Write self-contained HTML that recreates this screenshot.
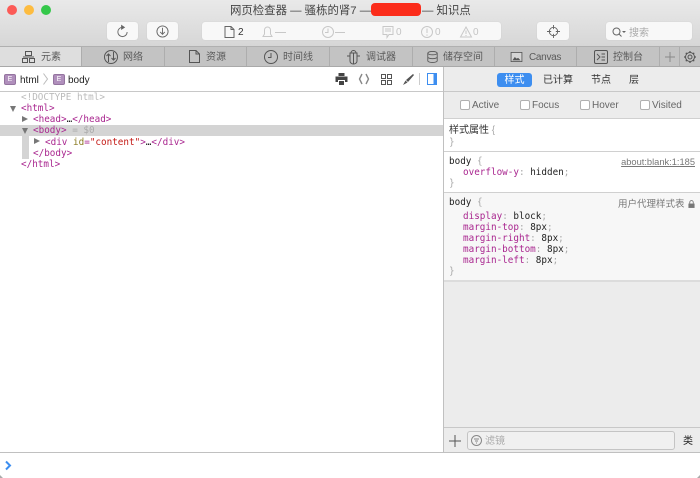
<!DOCTYPE html>
<html><head><meta charset="utf-8">
<style>
html,body{margin:0;padding:0;background:#fff}
#r{position:relative;width:700px;height:478px;overflow:hidden;background:#fff;font-family:"Liberation Sans","Noto Sans CJK SC",sans-serif;font-size:10px;color:#333;filter:blur(.3px)}
.a{position:absolute;white-space:nowrap}
.btn{position:absolute;top:22px;height:18px;background:#f8f8f8;border-radius:3px;box-shadow:0 0 1px #c4c4c4}
.tab{position:absolute;top:46px;height:20px;background:#c3c3c3;border-right:1px solid #adadad;box-sizing:border-box}
.tl{position:absolute;top:52px;font-size:10px;line-height:12px;color:#5a5a5a;white-space:nowrap}
.m{position:absolute;font:9.3px/11px "DejaVu Sans Mono","Liberation Mono",monospace;white-space:pre;color:#222}
.t{color:#a9268f}.g{color:#aaa}.v{color:#c41a16}.y{color:#8a7a20}
.cb{position:absolute;top:100px;width:10px;height:10px;border:1px solid #b0b0b0;border-radius:2px;background:#fff;box-sizing:border-box}
.cl{position:absolute;top:100px;font-size:10px;line-height:12px;color:#666}
svg{position:absolute;overflow:visible}
.tri{position:absolute;width:0;height:0}
.d{border-left:3.5px solid transparent;border-right:3.5px solid transparent;border-top:6px solid #777}
.rr{border-top:3.5px solid transparent;border-bottom:3.5px solid transparent;border-left:6px solid #777}
.E{position:absolute;top:74px;width:12px;height:11px;background:#b08fbc;border:1px solid #94749f;box-sizing:border-box;border-radius:2px;color:#fff;font-size:7px;line-height:9px;text-align:center}
</style></head><body>
<div id="r">
<!-- title/tool bar -->
<div class="a" style="left:0;top:0;width:700px;height:46px;background:linear-gradient(#e9e9e9,#d6d6d6)"></div>
<div class="a" style="left:7px;top:5px;width:10px;height:10px;border-radius:50%;background:#fc5b57"></div>
<div class="a" style="left:24px;top:5px;width:10px;height:10px;border-radius:50%;background:#fdbc40"></div>
<div class="a" style="left:41px;top:5px;width:10px;height:10px;border-radius:50%;background:#34c84a"></div>
<div class="a" style="left:230px;top:3px;font-size:11.4px;line-height:16px;color:#444">网页检查器 — 骚栋的肾7 —</div>
<div class="a" style="left:371px;top:3px;width:50px;height:13px;background:#fb2c1a;border-radius:4px"></div>
<div class="a" style="left:422px;top:3px;font-size:11.4px;line-height:16px;color:#444">— 知识点</div>

<div class="btn" style="left:107px;width:31px"></div>
<svg style="left:116px;top:25px" width="13" height="13" viewBox="0 0 14 14" fill="none" stroke="#666"><path d="M7 2.500a5 5 0 1 0 5 5"/><path d="M6 0.500l3 2-3 2z" fill="#666"/></svg>
<div class="btn" style="left:147px;width:31px"></div>
<svg style="left:156px;top:25px" width="13" height="13" viewBox="0 0 14 14" fill="none" stroke="#666"><circle cx="7" cy="7" r="6"/><path d="M7 3v7M4.500 7.500L7 10l2.500-2.500"/></svg>
<div class="btn" style="left:202px;width:299px"></div>
<svg style="left:224px;top:26px" width="11" height="12" viewBox="0 0 11 12" fill="none" stroke="#666"><path d="M1 .5h6l3 3v8H1zM7 .5v3h3"/></svg>
<div class="a" style="left:238px;top:27px;font-size:10px;line-height:12px;color:#333">2</div>
<svg style="left:262px;top:26px" width="26" height="12" viewBox="0 0 26 12" fill="none" stroke="#c8c8c8"><path d="M1 10.500h9L8.500 8V4a3 3 0 0 0-6 0v4zM13 6.500h11"/></svg>
<svg style="left:322px;top:26px" width="24" height="12" viewBox="0 0 24 12" fill="none" stroke="#c8c8c8"><circle cx="6" cy="6" r="5.500"/><path d="M6 2.500V6.500H3M13 6.500h10"/></svg>
<svg style="left:382px;top:26px" width="12" height="12" viewBox="0 0 12 12" fill="none" stroke="#c8c8c8"><path d="M1 .5h10v8H7l-2 3v-3H1zM3 3h6M3 5h6"/></svg>
<div class="a" style="left:396px;top:27px;line-height:12px;color:#c4c4c4">0</div>
<svg style="left:421px;top:26px" width="12" height="12" viewBox="0 0 12 12" fill="none" stroke="#c8c8c8"><circle cx="6" cy="6" r="5.500"/><path d="M6 2.500v4.500M6 8.500v1.200"/></svg>
<div class="a" style="left:435px;top:27px;line-height:12px;color:#c4c4c4">0</div>
<svg style="left:460px;top:26px" width="12" height="12" viewBox="0 0 12 12" fill="none" stroke="#c8c8c8"><path d="M6 1l5.500 10H.5zM6 4.500v3.500M6 9v1"/></svg>
<div class="a" style="left:473px;top:27px;line-height:12px;color:#c4c4c4">0</div>
<div class="btn" style="left:537px;width:32px"></div>
<svg style="left:547px;top:25px" width="13" height="13" viewBox="0 0 14 14" fill="none" stroke="#666"><circle cx="7" cy="7" r="4.500"/><path d="M7 0v4.500M7 9.500V14M0 7h4.500M9.500 7H14"/></svg>
<div class="btn" style="left:606px;width:86px"></div>
<svg style="left:612px;top:27px" width="16" height="10" viewBox="0 0 16 10" fill="none" stroke="#666"><circle cx="4.500" cy="4.500" r="3.500"/><path d="M7 7l2.500 2.500"/><path d="M10 4h4l-2 2z" fill="#666" stroke="none"/></svg>
<div class="a" style="left:629px;top:27px;font-size:10px;line-height:14px;color:#aaa">搜索</div>

<!-- tabs -->
<div class="tab" style="left:0;width:82px;background:#dedede"></div>
<div class="tab" style="left:82px;width:83px"></div>
<div class="tab" style="left:165px;width:82px"></div>
<div class="tab" style="left:247px;width:83px"></div>
<div class="tab" style="left:330px;width:83px"></div>
<div class="tab" style="left:413px;width:82px"></div>
<div class="tab" style="left:495px;width:82px"></div>
<div class="tab" style="left:577px;width:83px"></div>
<div class="tab" style="left:660px;width:20px"></div>
<div class="tab" style="left:680px;width:20px;border-right:0"></div>
<div class="a" style="left:0;top:46px;width:700px;height:1px;background:#b0b0b0"></div>
<div class="a" style="left:0;top:66px;width:700px;height:1px;background:#a9a9a9"></div>

<svg style="left:22px;top:51px" width="13" height="12" viewBox="0 0 13 12" fill="none" stroke="#555"><path d="M3.500.5h6v4h-6zM.5 7.500h5v4h-5zM7.500 7.500h5v4h-5zM1 6h11"/></svg>
<div class="tl" style="left:41px">元素</div>
<svg style="left:104px;top:50px" width="14" height="14" viewBox="0 0 14 14" fill="none" stroke="#555"><circle cx="7" cy="7" r="6.500"/><path d="M4.500 12V4M2.500 6l2-2 2 2M9.500 2v8M7.500 8l2 2 2-2"/></svg>
<div class="tl" style="left:123px">网络</div>
<svg style="left:189px;top:50px" width="11" height="13" viewBox="0 0 11 13" fill="none" stroke="#555"><path d="M.5.5h6.500l3.500 3.500v8.500H.5zM7 .5V4h3.500"/></svg>
<div class="tl" style="left:206px">资源</div>
<svg style="left:264px;top:50px" width="14" height="14" viewBox="0 0 14 14" fill="none" stroke="#555"><circle cx="7" cy="7" r="6.500"/><path d="M7 3v4.500H4"/></svg>
<div class="tl" style="left:283px">时间线</div>
<svg style="left:347px;top:50px" width="13" height="14" viewBox="0 0 13 14" fill="none" stroke="#555"><path d="M3 3h7v8a3.500 3 0 0 1-7 0zM6.500 3v11M0 6h3M10 6h3M4 3a2.500 2.500 0 0 1 5 0"/></svg>
<div class="tl" style="left:366px">调试器</div>
<svg style="left:426px;top:51px" width="13" height="12" viewBox="0 0 13 14" fill="none" stroke="#555"><ellipse cx="6.500" cy="2.500" rx="5.500" ry="2"/><path d="M1 2.500v9c0 1 2.500 2 5.500 2s5.500-1 5.500-2v-9M1 7c0 1 2.500 2 5.500 2s5.500-1 5.500-2"/></svg>
<div class="tl" style="left:443px">储存空间</div>
<svg style="left:510px;top:52px" width="13" height="10" viewBox="0 0 14 12"><rect x=".5" y=".5" width="13" height="11" fill="#fff" fill-opacity=".3" stroke="#555"/><path d="M2 10l3-4 2 2 2-1 3 3z" fill="#555"/></svg>
<div class="tl" style="left:529px;letter-spacing:-.3px">Canvas</div>
<svg style="left:594px;top:50px" width="14" height="14" viewBox="0 0 14 14" fill="none" stroke="#555"><rect x=".5" y=".5" width="13" height="13" rx="1.500"/><path d="M3 4l3 3-3 3M7.500 4h3.500M7.500 7h3.500M7.500 10h3.500" stroke-width=".9"/></svg>
<div class="tl" style="left:613px">控制台</div>
<svg style="left:665px;top:52px" width="10" height="10" viewBox="0 0 10 10" stroke="#888"><path d="M5 0v10M0 5h10"/></svg>
<svg style="left:684px;top:51px" width="12" height="12" viewBox="0 0 12 12" fill="none" stroke="#555"><circle cx="6" cy="6" r="2"/><circle cx="6" cy="6" r="4.500"/><path d="M6 0v1.500M6 10.500V12M0 6h1.500M10.500 6H12M1.800 1.800l1 1M9.200 9.200l1 1M1.800 10.200l1-1M9.200 2.800l1-1" stroke-width="1.300"/></svg>

<!-- left panel header -->
<div class="a" style="left:0;top:67px;width:443px;height:24px;background:#fff"></div>
<div class="a" style="left:0;top:91px;width:443px;height:1px;background:#c8c8c8"></div>
<div class="E" style="left:4px">E</div>
<div class="a" style="left:20px;top:74px;font-size:10px;line-height:13px;color:#222">html</div>
<svg style="left:43px;top:73px" width="5" height="12" viewBox="0 0 5 12" fill="none" stroke="#bbb"><path d="M.5.5l4 5.500-4 5.500"/></svg>
<div class="E" style="left:53px">E</div>
<div class="a" style="left:68px;top:74px;font-size:10px;line-height:13px;color:#222">body</div>

<svg style="left:335px;top:73px" width="13" height="12" viewBox="0 0 12 12"><path d="M3 0h6v3H3zM0 3.500h12V9h-2.500V7h-7v2H0zM3.500 8h5v4h-5z" fill="#444"/></svg>
<svg style="left:358px;top:73px" width="12" height="12" viewBox="0 0 12 12" fill="none" stroke="#888" stroke-width="1.400"><path d="M4 1L1.500 6 4 11M8 1l2.500 5L8 11"/></svg>
<svg style="left:381px;top:74px" width="11" height="11" viewBox="0 0 11 11" fill="none" stroke="#555"><rect x=".5" y=".5" width="4" height="4"/><rect x="6.500" y=".5" width="4" height="4"/><rect x=".5" y="6.500" width="4" height="4"/><rect x="6.500" y="6.500" width="4" height="4"/></svg>
<svg style="left:403px;top:74px" width="11" height="11" viewBox="0 0 11 11"><path d="M10 0l1 1-6 7-2-2zM2.500 6.500l2 2L0 11z" fill="#555"/></svg>
<div class="a" style="left:419px;top:73px;width:1px;height:12px;background:#ccc"></div>
<svg style="left:427px;top:73px" width="10" height="12" viewBox="0 0 10 12"><rect x=".5" y=".5" width="9" height="11" fill="none" stroke="#3d8ef0"/><rect x="6.500" y="1" width="2.500" height="10" fill="#3d8ef0"/></svg>

<!-- DOM tree -->
<div class="a" style="left:0;top:125px;width:443px;height:11px;background:#d4d4d4"></div>
<div class="a" style="left:22px;top:136px;width:7px;height:23px;background:#d4d4d4"></div>
<div class="m g" style="left:21px;top:92px;color:#bbb">&lt;!DOCTYPE html&gt;</div>
<div class="tri d" style="left:10px;top:106px"></div>
<div class="m" style="left:21px;top:103px"><span class="t">&lt;html&gt;</span></div>
<div class="tri rr" style="left:22px;top:116px"></div>
<div class="m" style="left:33px;top:114px"><span class="t">&lt;head&gt;</span>…<span class="t">&lt;/head&gt;</span></div>
<div class="tri d" style="left:22px;top:128px"></div>
<div class="m" style="left:33px;top:125px"><span class="t">&lt;body&gt;</span><span class="g"> = $0</span></div>
<div class="tri rr" style="left:34px;top:138px"></div>
<div class="m" style="left:45px;top:137px"><span class="t">&lt;div</span> <span class="y">id</span><span class="t">=</span><span class="v">"content"</span><span class="t">&gt;</span>…<span class="t">&lt;/div&gt;</span></div>
<div class="m" style="left:33px;top:148px"><span class="t">&lt;/body&gt;</span></div>
<div class="m" style="left:21px;top:159px"><span class="t">&lt;/html&gt;</span></div>

<!-- right panel -->
<div class="a" style="left:443px;top:67px;width:257px;height:385px;background:#ececec;border-left:1px solid #c0c0c0;box-sizing:border-box"></div>
<div class="a" style="left:444px;top:91px;width:256px;height:1px;background:#c8c8c8"></div>
<div class="a" style="left:497px;top:73px;width:35px;height:14px;background:#3d8ef0;border-radius:3px;color:#fff;font-size:10px;line-height:16px;text-align:center">样式</div>
<div class="a" style="left:543px;top:74px;font-size:10px;line-height:13px;color:#333">已计算</div>
<div class="a" style="left:591px;top:74px;font-size:10px;line-height:13px;color:#333">节点</div>
<div class="a" style="left:629px;top:74px;font-size:10px;line-height:13px;color:#333">层</div>

<div class="cb" style="left:460px"></div><div class="cl" style="left:472px">Active</div>
<div class="cb" style="left:520px"></div><div class="cl" style="left:532px">Focus</div>
<div class="cb" style="left:580px"></div><div class="cl" style="left:592px">Hover</div>
<div class="cb" style="left:640px"></div><div class="cl" style="left:652px">Visited</div>
<div class="a" style="left:444px;top:118px;width:256px;height:1px;background:#d0d0d0"></div>

<div class="a" style="left:444px;top:119px;width:256px;height:32px;background:#fff"></div>
<div class="a" style="left:449px;top:124px;font-size:10px;line-height:13px;color:#333">样式属性 <span style="color:#aaa">{</span></div>
<div class="m g" style="left:449px;top:137px">}</div>
<div class="a" style="left:444px;top:151px;width:256px;height:1px;background:#d0d0d0"></div>

<div class="a" style="left:444px;top:152px;width:256px;height:40px;background:#fff"></div>
<div class="m" style="left:449px;top:156px">body <span class="g">{</span></div>
<div class="m" style="left:463px;top:167px"><span class="t">overflow-y</span><span class="g">:</span> hidden<span class="g">;</span></div>
<div class="m g" style="left:449px;top:178px">}</div>
<div class="a" style="right:5px;top:156px;font-size:9.300px;line-height:12px;color:#777;text-decoration:underline">about:blank:1:185</div>
<div class="a" style="left:444px;top:192px;width:256px;height:1px;background:#d0d0d0"></div>

<div class="a" style="left:444px;top:193px;width:256px;height:87px;background:#f7f7f7"></div>
<div class="m" style="left:449px;top:197px">body <span class="g">{</span></div>
<div class="a" style="left:618px;top:198px;font-size:9.500px;line-height:13px;color:#777">用户代理样式表</div>
<svg style="left:688px;top:200px" width="7" height="8" viewBox="0 0 8 9"><path d="M2 4V2.500a2 2 0 0 1 4 0V4" fill="none" stroke="#777"/><rect x="0.500" y="4" width="7" height="5" fill="#777"/></svg>
<div class="m" style="left:463px;top:211px"><span class="t">display</span><span class="g">:</span> block<span class="g">;</span></div>
<div class="m" style="left:463px;top:222px"><span class="t">margin-top</span><span class="g">:</span> 8px<span class="g">;</span></div>
<div class="m" style="left:463px;top:233px"><span class="t">margin-right</span><span class="g">:</span> 8px<span class="g">;</span></div>
<div class="m" style="left:463px;top:244px"><span class="t">margin-bottom</span><span class="g">:</span> 8px<span class="g">;</span></div>
<div class="m" style="left:463px;top:255px"><span class="t">margin-left</span><span class="g">:</span> 8px<span class="g">;</span></div>
<div class="m g" style="left:449px;top:266px">}</div>
<div class="a" style="left:444px;top:280px;width:256px;height:2px;background:#dcdcdc"></div>

<div class="a" style="left:444px;top:427px;width:256px;height:1px;background:#c8c8c8"></div>
<svg style="left:449px;top:435px" width="12" height="12" viewBox="0 0 12 12" stroke="#555"><path d="M6 0v12M0 6h12"/></svg>
<div class="a" style="left:467px;top:431px;width:208px;height:19px;box-sizing:border-box;border:1px solid #c4c4c4;border-radius:3px;background:#f0f0f0"></div>
<svg style="left:471px;top:435px" width="11" height="11" viewBox="0 0 11 11" fill="none" stroke="#888"><circle cx="5.500" cy="5.500" r="5"/><path d="M3 4h5M4 6h3M5 8h1"/></svg>
<div class="a" style="left:485px;top:435px;font-size:10px;line-height:14px;color:#aaa">滤镜</div>
<div class="a" style="left:683px;top:435px;font-size:10px;line-height:14px;color:#222">类</div>

<!-- console -->
<div class="a" style="left:0;top:452px;width:700px;height:1px;background:#c0c0c0"></div>
<div class="a" style="left:0;top:453px;width:700px;height:25px;background:#fff"></div>
<svg style="left:5px;top:461px" width="7" height="9" viewBox="0 0 7 9" fill="none" stroke="#3d8ef0" stroke-width="2"><path d="M1 .5l4 4-4 4"/></svg>
<svg style="left:0;top:475px" width="700" height="3" viewBox="0 0 700 3"><path d="M0 0v3h3zM700 0v3h-3z" fill="#aaa"/></svg>
</div>
</body></html>
